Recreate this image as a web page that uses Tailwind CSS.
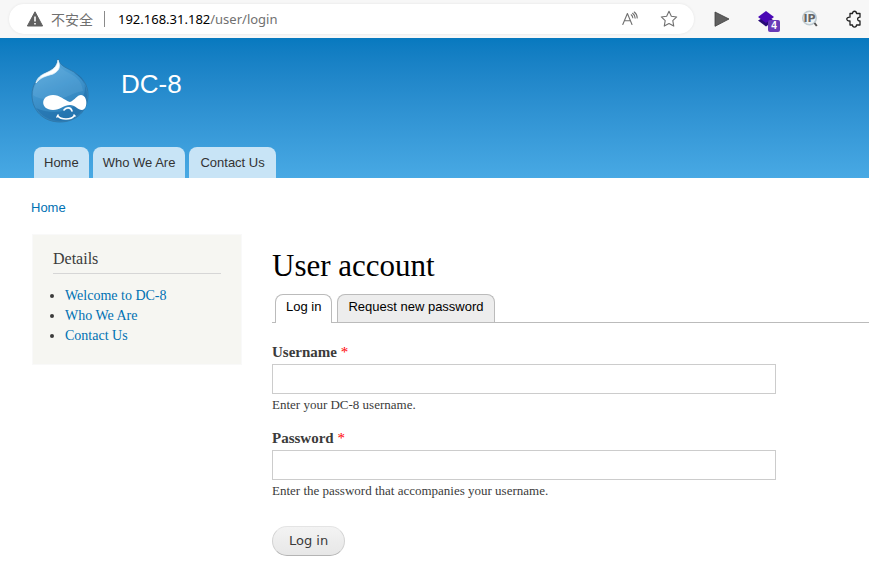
<!DOCTYPE html>
<html lang="en">
<head>
<meta charset="utf-8">
<meta name="viewport" content="width=device-width, initial-scale=1">
<title>User account | DC-8</title>
<script src="https://cdn.jsdelivr.net/npm/@tailwindcss/browser@4"></script>
</head>
<body class="bg-white text-[#3b3b3b] font-['Liberation_Serif',Georgia,serif]">

<!-- Browser toolbar -->
<div class="flex h-[38px] items-center overflow-hidden bg-[#f7f7f7] pl-[9px] font-['Noto_Sans','Noto_Sans_CJK_SC',sans-serif] text-sm text-[#707070]">
  <div class="flex h-[30px] min-w-0 flex-1 items-center rounded-full bg-white pl-[18px] pr-4 shadow-[0_0_3px_rgba(0,0,0,0.08)]">
    <svg class="size-4 shrink-0" viewBox="0 0 16 16" aria-hidden="true"><path d="M8 .8 15.6 15H.4Z" fill="#606060" stroke="#606060" stroke-linejoin="round"/><path d="M8 5.5v5M8 12v1.6" stroke="#fff" stroke-width="1.6"/></svg>
    <span class="ml-2 shrink-0 font-['Noto_Sans_CJK_SC',sans-serif]">不安全</span>
    <span class="ml-[11px] h-4 w-px shrink-0 bg-[#8a8a8a]"></span>
    <span class="ml-[13px] min-w-0 flex-1 truncate text-[13px]"><span class="text-black">192.168.31.182</span>/user/login</span>
    <button type="button" aria-label="Read aloud" class="shrink-0"><svg class="size-4" viewBox="0 0 16 16" fill="none" stroke="#707070" stroke-width="1.1" stroke-linecap="round" stroke-linejoin="round"><path d="M.8 13.500 5.400 2.500 10 13.500M2.400 9.800h6M9.200 3.800c1 .8 1.500 1.700 1.600 2.900M10.600 2.300c1.600 1.200 2.500 2.800 2.500 4.800M12.200 1c1.900 1.400 3 3.500 3 6"/></svg></button>
    <button type="button" aria-label="Add to favorites" class="ml-[22px] shrink-0"><svg class="size-[18px]" viewBox="0 0 18 18" fill="none" stroke="#707070" stroke-width="1.1" stroke-linejoin="round"><path d="m9 1.300 2.350 4.900 5.350.75-3.900 3.750.95 5.400L9 13.600l-4.750 2.500.95-5.400L1.300 6.950l5.350-.75Z"/></svg></button>
  </div>
  <button type="button" aria-label="Run" class="ml-[20px] shrink-0"><svg class="size-4" viewBox="0 0 16 16"><path d="M1 1 15 8 1 15.300Z" fill="#606060" stroke="#3d3d3d" stroke-width=".8"/></svg></button>
  <button type="button" aria-label="Layers, 4 items" class="relative ml-[28px] shrink-0">
    <svg class="size-4" viewBox="0 0 16 16"><path d="M0 9.500 8 5l8 4.500-8 6Z" fill="#270b76"/><path d="M8 0 16 6 8 12 0 6Z" fill="#4a08b5"/></svg>
    <span class="absolute left-[10px] top-[9px] flex h-3 w-3 items-center justify-center rounded-xs bg-[#683ab7] font-['Liberation_Sans',sans-serif] text-[10px] font-bold text-white">4</span>
  </button>
  <button type="button" aria-label="IP lookup" class="ml-[27px] shrink-0"><svg class="size-[18px]" viewBox="0 0 18 18"><circle cx="8.500" cy="8" r="6.800" fill="#edf3f5" stroke="#bfcbd1" stroke-width="1.600"/><path d="m13.500 13 2.300 3" stroke="#555" stroke-width="2"/><text x="8.500" y="12" text-anchor="middle" fill="#666" font-size="11" font-weight="700" font-family="DejaVu Sans">IP</text></svg></button>
  <button type="button" aria-label="Extensions" class="ml-[26px] mr-[6px] shrink-0"><svg class="size-[18px]" viewBox="0 0 18 18" fill="none" stroke="#222" stroke-width="1.300" stroke-linejoin="round"><path d="M5 3.500h2.500c0-3 4-3 4 0H15v3.700c-3.200-.3-3.200 4.100 0 3.800v4h-3.500c0 2.800-4 2.800-4 0H5V11c-4.300.3-4.300-4.100 0-3.800Z"/></svg></button>
</div>

<header class="flex h-[140px] flex-col justify-between bg-linear-to-b from-[#0779bf] to-[#48a9e4] pl-[31px] pt-5 font-['Liberation_Sans',Arial,sans-serif]">
  <div class="flex items-start">
    <a href="#" aria-label="Home">
      <svg class="h-[65px] w-[58px]" viewBox="0 0 58 65">
        <defs>
          <linearGradient id="drop" x1="0" y1="0" x2=".4" y2="1"><stop offset="0" stop-color="#62aede"/><stop offset=".55" stop-color="#3f94cd"/><stop offset="1" stop-color="#2f80b9"/></linearGradient>
          <linearGradient id="shine" x1="1" y1="0" x2="0" y2="1"><stop offset="0" stop-color="#fff"/><stop offset=".7" stop-color="#fff"/><stop offset="1" stop-color="#b9def3"/></linearGradient>
        </defs>
        <path d="M27 1c2 7 9 9 16 13 9 6 14 13 14 23 0 16-12 27-28 27S1 53 1 37c0-10 5-17 13-22 7-4 12-7 13-14Z" fill="url(#drop)" stroke="#2e73a3" stroke-width=".8"/>
        <path d="M43 15c9 6 13 13 13 22 0 16-12 26-27 26-10 0-19-5-24-13 11 5 26 6 37-1 13-8 15-21 8-30-2-2-4-3-7-4Z" fill="#1d6ba7" opacity=".55"/>
        <path d="M2 37c0-9 5-16 13-21 6-3 10-6 12-9 4 5 10 7 16 11 5 3 8 8 9 15-12 2-17 8-26 8-8 0-18 1-24-4Z" fill="#8fc8ec" opacity=".16"/>
        <path d="M27 2c3 7 1 11-5 14-7 2-12 3-17 9 1-5 5-8 10-10 7-3 11-6 12-13Z" fill="url(#shine)" stroke="#e6f5fd" stroke-width=".8"/>
        <path d="M22 37c7 0 11 5 17 7 5-2 7-7 11-7 7 0 7 15 1 15-4 0-7-5-12-5-6 0-10 5-17 5-13 0-13-15 0-15Z" fill="#fff"/>
        <path d="M33 52c2-3 7-3 8 1M27 58c3 4 13 4 16 0M27 57l-1 2M43 57l1 1" fill="none" stroke="#fff" stroke-width="1.600" stroke-linecap="round"/>
      </svg>
    </a>
    <a href="#" class="ml-8 mt-[11px] text-[26px] leading-[30px] text-white">DC-8</a>
  </div>
  <nav aria-label="Main menu" class="ml-[3px] flex gap-1 text-[13px] text-[#333]">
    <a href="#" class="h-[31px] rounded-t-lg bg-[#c8e4f6] px-[10px] leading-[31px]">Home</a>
    <a href="#" class="h-[31px] rounded-t-lg bg-[#c8e4f6] px-[10px] leading-[31px]">Who We Are</a>
    <a href="#" class="h-[31px] rounded-t-lg bg-[#c8e4f6] px-[11px] leading-[31px]">Contact Us</a>
  </nav>
</header>

<nav aria-label="Breadcrumb" class="px-[31px] pt-5 font-['Liberation_Sans',Arial,sans-serif] text-[13px] leading-5 text-[#0071b3]"><a href="#">Home</a></nav>

<div class="flex items-start gap-[30px] pl-8 pt-4">
  <aside class="w-[210px] shrink-0 border border-[#f9f9f9] bg-[#f6f6f2] px-5 pb-[18px] pt-[14px]">
    <h2 class="border-b border-[#d6d6d6] pb-1 text-base leading-5">Details</h2>
    <ul class="mt-3 list-disc pl-3 text-sm leading-[20px] marker:text-[#3b3b3b]">
      <li><a href="#" class="text-[#0071b3]">Welcome to DC-8</a></li>
      <li><a href="#" class="text-[#0071b3]">Who We Are</a></li>
      <li><a href="#" class="text-[#0071b3]">Contact Us</a></li>
    </ul>
  </aside>

  <main class="min-w-0 flex-1 pt-4">
    <h1 class="text-[31px] leading-8 text-black">User account</h1>
    <div class="mt-3 flex gap-[5px] border-b border-[#bbb] pl-[3px] font-['Liberation_Sans',Arial,sans-serif] text-[13px] leading-6 text-black">
      <a href="#" class="-mb-px h-[29px] rounded-t-lg border border-b-0 border-[#bbb] bg-white px-[10px]">Log in</a>
      <a href="#" class="h-7 rounded-t-lg border border-b-0 border-[#bbb] bg-[#ededed] px-[10px]">Request new password</a>
    </div>
    <form class="pr-4 pt-[19px]">
      <label for="user" class="block text-[15px] font-bold leading-5">Username <span class="font-normal text-[#f00]">*</span></label>
      <input id="user" type="text" class="mt-[2px] block h-[30px] w-full max-w-[504px] border border-[#ccc] bg-white px-1 text-sm">
      <p class="text-[13px] leading-[22px]">Enter your DC-8 username.</p>
      <label for="pass" class="mt-3 block text-[15px] font-bold leading-5">Password <span class="font-normal text-[#f00]">*</span></label>
      <input id="pass" type="password" class="mt-[2px] block h-[30px] w-full max-w-[504px] border border-[#ccc] bg-white px-1 text-sm">
      <p class="text-[13px] leading-[22px]">Enter the password that accompanies your username.</p>
      <button type="submit" class="mt-6 h-[30px] rounded-full border border-[#e4e4e4] border-b-[#b4b4b4] border-x-[#d2d2d2] bg-linear-to-b from-[#f3f3f3] to-[#e7e7e7] px-4 font-['DejaVu_Sans',Verdana,sans-serif] text-[13px] text-[#3a3a3a]">Log in</button>
    </form>
  </main>
</div>
</body>
</html>
